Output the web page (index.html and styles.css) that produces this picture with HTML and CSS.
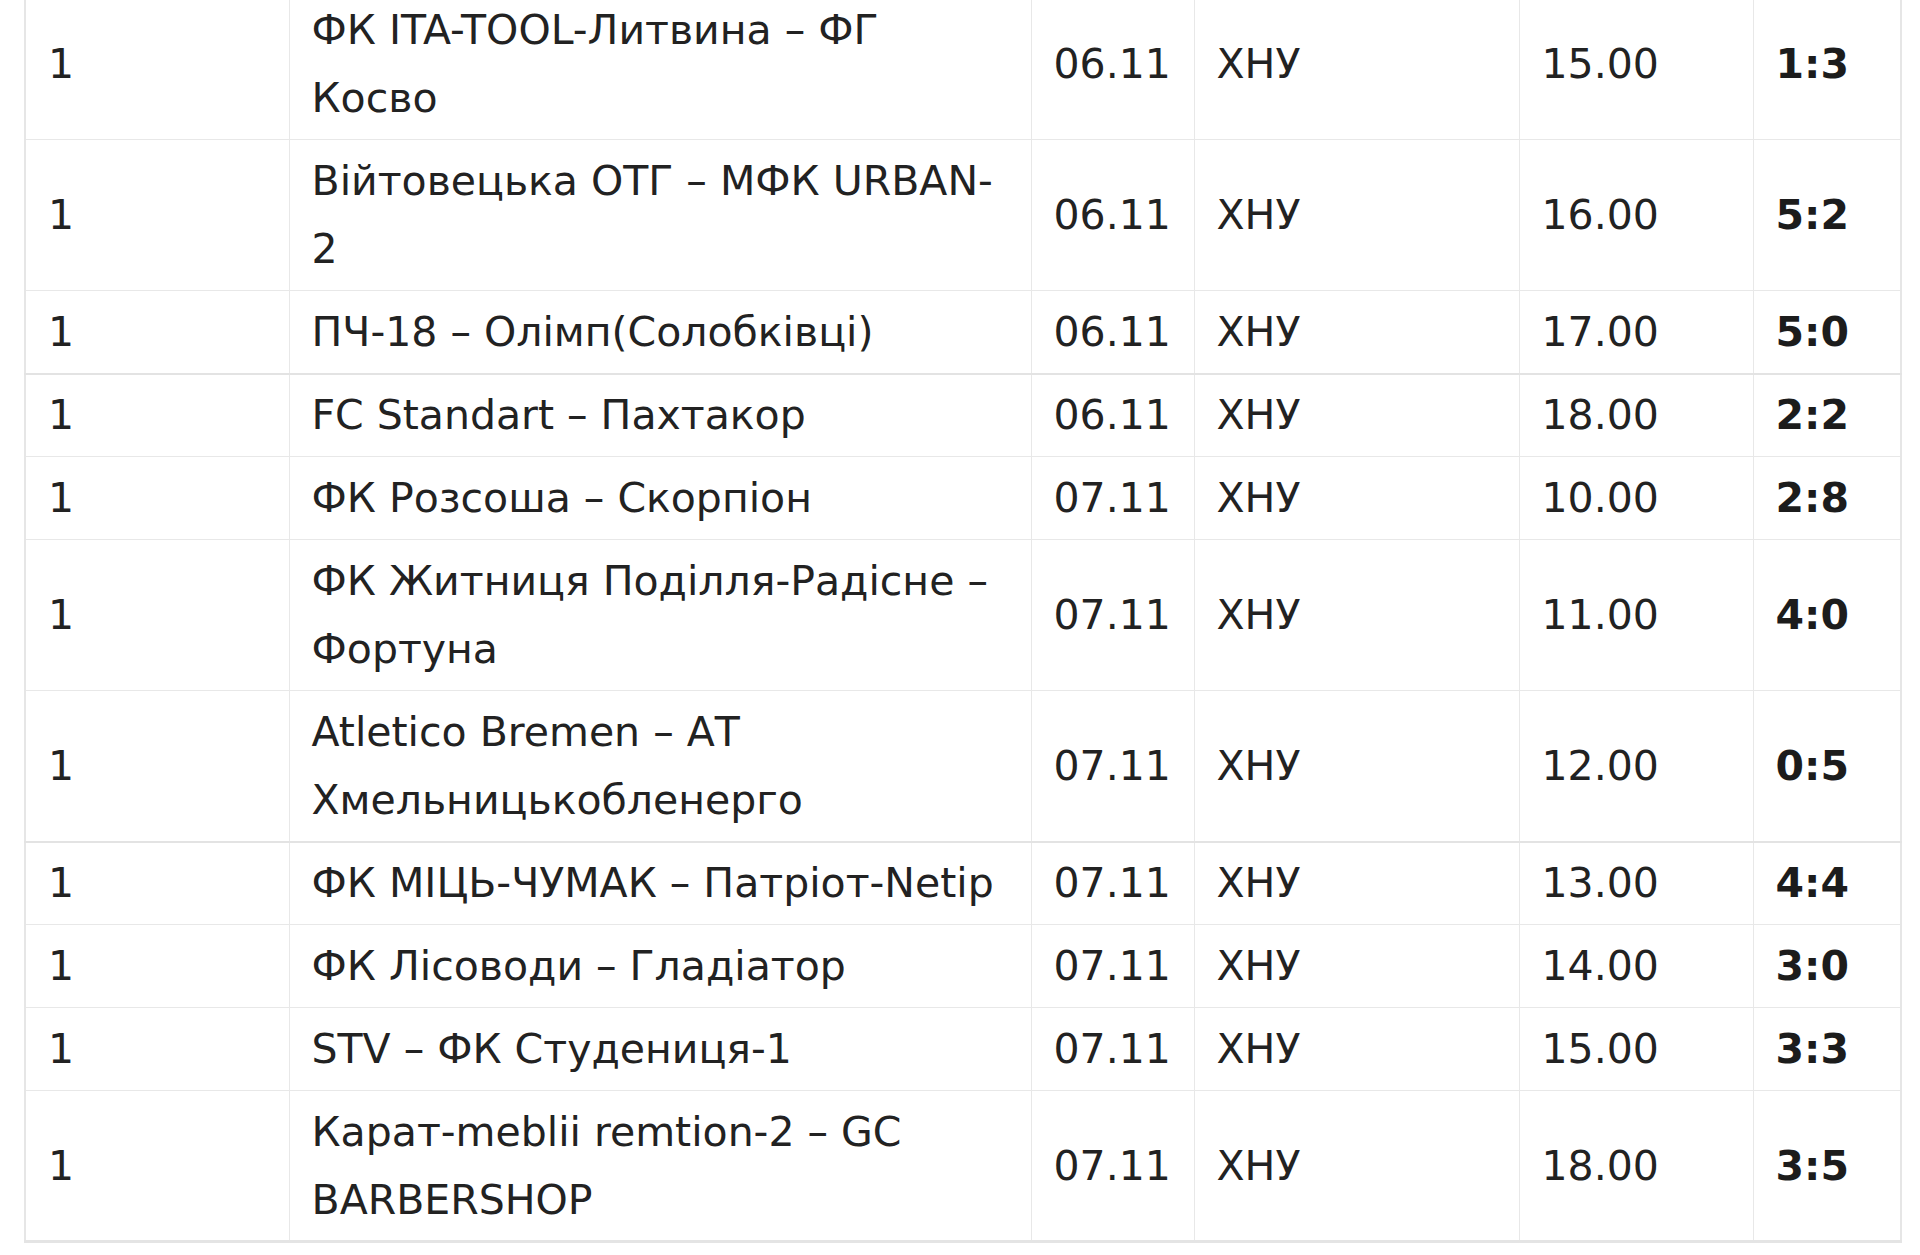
FILE: index.html
```html
<!DOCTYPE html>
<html lang="uk">
<head>
<meta charset="utf-8">
<title>Результати</title>
<link rel="stylesheet" href="styles.css">
</head>
<body>
<div class="wrap">
<table class="games">
  <colgroup>
    <col class="c-tour"><col class="c-match"><col class="c-date"><col class="c-place"><col class="c-time"><col class="c-score">
  </colgroup>
  <tbody>
    <tr><td>1</td><td>ФК ITA-TOOL-Литвина – ФГ<br>Косво</td><td>06.11</td><td>ХНУ</td><td>15.00</td><td class="score">1:3</td></tr>
    <tr><td>1</td><td>Вiйтовецька ОТГ – МФК URBAN-<br>2</td><td>06.11</td><td>ХНУ</td><td>16.00</td><td class="score">5:2</td></tr>
    <tr><td>1</td><td>ПЧ-18 – Олімп(Солобківці)</td><td>06.11</td><td>ХНУ</td><td>17.00</td><td class="score">5:0</td></tr>
    <tr class="thick"><td>1</td><td>FC Standart – Пахтакор</td><td>06.11</td><td>ХНУ</td><td>18.00</td><td class="score">2:2</td></tr>
    <tr><td>1</td><td>ФК Розсоша – Скорпіон</td><td>07.11</td><td>ХНУ</td><td>10.00</td><td class="score">2:8</td></tr>
    <tr><td>1</td><td>ФК Житниця Поділля-Радісне –<br>Фортуна</td><td>07.11</td><td>ХНУ</td><td>11.00</td><td class="score">4:0</td></tr>
    <tr><td>1</td><td>Atletico Bremen – АТ<br>Хмельницькобленерго</td><td>07.11</td><td>ХНУ</td><td>12.00</td><td class="score">0:5</td></tr>
    <tr class="thick"><td>1</td><td>ФК МІЦЬ-ЧУМАК – Патріот-Netip</td><td>07.11</td><td>ХНУ</td><td>13.00</td><td class="score">4:4</td></tr>
    <tr><td>1</td><td>ФК Лісоводи – Гладіатор</td><td>07.11</td><td>ХНУ</td><td>14.00</td><td class="score">3:0</td></tr>
    <tr><td>1</td><td>STV – ФК Студениця-1</td><td>07.11</td><td>ХНУ</td><td>15.00</td><td class="score">3:3</td></tr>
    <tr class="last"><td>1</td><td>Карат-meblii remtion-2 – GC<br>BARBERSHOP</td><td>07.11</td><td>ХНУ</td><td>18.00</td><td class="score">3:5</td></tr>
  </tbody>
</table>
</div>
</body>
</html>
```
FILE: styles.css
```css
html, body {
  margin: 0;
  padding: 0;
  background: #ffffff;
}
body {
  font-family: "DejaVu Sans", Verdana, sans-serif;
  color: #222222;
  overflow: hidden;
}
.wrap {
  padding-left: 24px;
}
.games {
  border-collapse: collapse;
  table-layout: fixed;
  width: 1876px;
  margin-top: -12px;
  font-size: 41px;
  line-height: 68px;
  border-left: 2px solid #e6e6e6;
  border-right: 2px solid #e6e6e6;
}
.c-tour { width: 264px; }
.c-match { width: 742px; }
.c-date { width: 163px; }
.c-place { width: 325px; }
.c-time { width: 234px; }
.c-score { width: 148px; }
.games td {
  padding: 7px 20px 7px 22px;
  border: 1px solid #e8e8e8;
  vertical-align: middle;
  text-align: left;
  white-space: nowrap;
}
.games tr.thick td {
  border-top: 2px solid #e3e3e3;
  padding-top: 6px;
}
.games tr.last td {
  border-bottom: 3px solid #e4e4e4;
  padding-bottom: 6px;
}
.games td.score {
  font-weight: bold;
  color: #1c1c1c;
}
```
